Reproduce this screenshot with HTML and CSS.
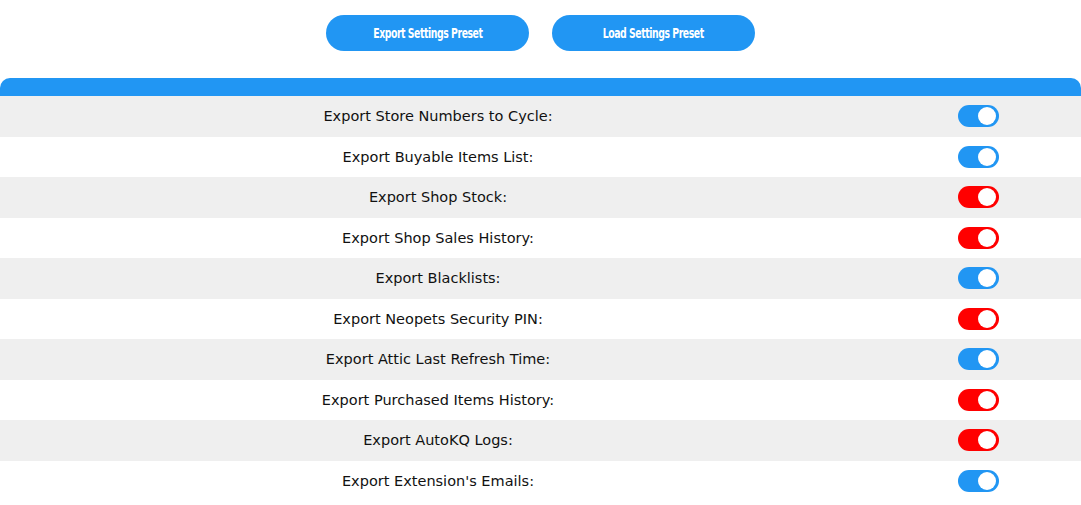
FILE: index.html
```html
<!DOCTYPE html>
<html>
<head>
<meta charset="utf-8">
<link rel="stylesheet" href="styles.css">
</head>
<body>
<div class="actions">
  <button class="preset-btn"><span>Export Settings Preset</span></button>
  <button class="preset-btn"><span>Load Settings Preset</span></button>
</div>
<div class="panel">
  <div class="panel-head"></div>
  <div class="row"><div class="label">Export Store Numbers to Cycle:</div><div class="ctl"><span class="toggle on"></span></div></div>
  <div class="row"><div class="label">Export Buyable Items List:</div><div class="ctl"><span class="toggle on"></span></div></div>
  <div class="row"><div class="label">Export Shop Stock:</div><div class="ctl"><span class="toggle off"></span></div></div>
  <div class="row"><div class="label">Export Shop Sales History:</div><div class="ctl"><span class="toggle off"></span></div></div>
  <div class="row"><div class="label">Export Blacklists:</div><div class="ctl"><span class="toggle on"></span></div></div>
  <div class="row"><div class="label">Export Neopets Security PIN:</div><div class="ctl"><span class="toggle off"></span></div></div>
  <div class="row"><div class="label">Export Attic Last Refresh Time:</div><div class="ctl"><span class="toggle on"></span></div></div>
  <div class="row"><div class="label">Export Purchased Items History:</div><div class="ctl"><span class="toggle off"></span></div></div>
  <div class="row"><div class="label">Export AutoKQ Logs:</div><div class="ctl"><span class="toggle off"></span></div></div>
  <div class="row"><div class="label">Export Extension's Emails:</div><div class="ctl"><span class="toggle on"></span></div></div>
</div>
</body>
</html>
```
FILE: styles.css
```css
html, body { margin: 0; padding: 0; background: #fff; }
body { font-family: "DejaVu Sans", Verdana, sans-serif; }
.actions {
  display: flex;
  justify-content: center;
  gap: 23px;
  padding-top: 15px;
  height: 78px;
  box-sizing: border-box;
}
.preset-btn {
  width: 203px;
  height: 36px;
  border: none;
  border-radius: 18px;
  background: #2196f3;
  color: #fff;
  font-family: "DejaVu Sans Condensed", "DejaVu Sans", sans-serif;
  font-stretch: condensed;
  font-weight: bold;
  font-size: 14px;
  padding: 0;
  display: flex;
  align-items: center;
  justify-content: center;
}
.preset-btn span {
  display: inline-block;
  letter-spacing: -0.6px;
  white-space: nowrap;
  transform: scaleX(0.74);
}
.panel-head {
  height: 18px;
  background: #2196f3;
  border-radius: 10px 10px 0 0;
}
.row {
  display: flex;
  align-items: center;
  height: 40.5px;
}
.row:nth-child(even) { background: #efefef; }
.label {
  width: 876px;
  text-align: center;
  font-size: 14.5px;
  color: #111;
}
.ctl {
  flex: 1;
  display: flex;
  justify-content: center;
}
.toggle {
  position: relative;
  display: block;
  width: 41px;
  height: 22px;
  border-radius: 11px;
}
.toggle.on { background: #2196f3; }
.toggle.off { background: #ff0000; }
.toggle::after {
  content: "";
  position: absolute;
  right: 3px;
  top: 2px;
  width: 18px;
  height: 18px;
  border-radius: 50%;
  background: #fff;
}
```
